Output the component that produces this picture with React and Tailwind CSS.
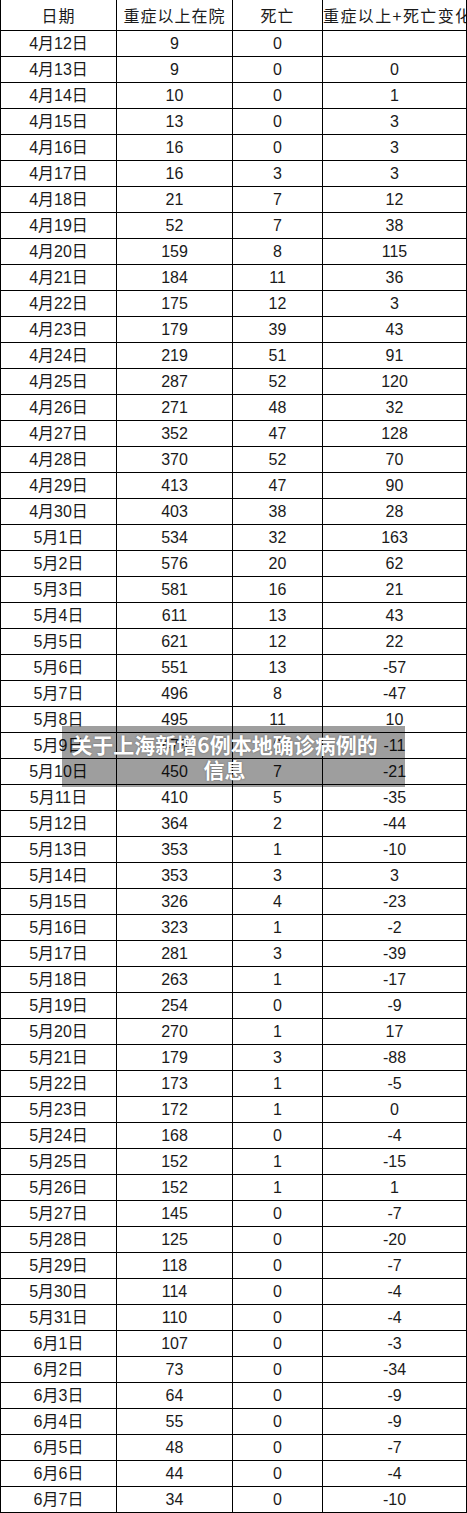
const rows = [
  ["4月12日", "9", "0", ""],
  ["4月13日", "9", "0", "0"],
  ["4月14日", "10", "0", "1"],
  ["4月15日", "13", "0", "3"],
  ["4月16日", "16", "0", "3"],
  ["4月17日", "16", "3", "3"],
  ["4月18日", "21", "7", "12"],
  ["4月19日", "52", "7", "38"],
  ["4月20日", "159", "8", "115"],
  ["4月21日", "184", "11", "36"],
  ["4月22日", "175", "12", "3"],
  ["4月23日", "179", "39", "43"],
  ["4月24日", "219", "51", "91"],
  ["4月25日", "287", "52", "120"],
  ["4月26日", "271", "48", "32"],
  ["4月27日", "352", "47", "128"],
  ["4月28日", "370", "52", "70"],
  ["4月29日", "413", "47", "90"],
  ["4月30日", "403", "38", "28"],
  ["5月1日", "534", "32", "163"],
  ["5月2日", "576", "20", "62"],
  ["5月3日", "581", "16", "21"],
  ["5月4日", "611", "13", "43"],
  ["5月5日", "621", "12", "22"],
  ["5月6日", "551", "13", "-57"],
  ["5月7日", "496", "8", "-47"],
  ["5月8日", "495", "11", "10"],
  ["5月9日", "478", "6", "-11"],
  ["5月10日", "450", "7", "-21"],
  ["5月11日", "410", "5", "-35"],
  ["5月12日", "364", "2", "-44"],
  ["5月13日", "353", "1", "-10"],
  ["5月14日", "353", "3", "3"],
  ["5月15日", "326", "4", "-23"],
  ["5月16日", "323", "1", "-2"],
  ["5月17日", "281", "3", "-39"],
  ["5月18日", "263", "1", "-17"],
  ["5月19日", "254", "0", "-9"],
  ["5月20日", "270", "1", "17"],
  ["5月21日", "179", "3", "-88"],
  ["5月22日", "173", "1", "-5"],
  ["5月23日", "172", "1", "0"],
  ["5月24日", "168", "0", "-4"],
  ["5月25日", "152", "1", "-15"],
  ["5月26日", "152", "1", "1"],
  ["5月27日", "145", "0", "-7"],
  ["5月28日", "125", "0", "-20"],
  ["5月29日", "118", "0", "-7"],
  ["5月30日", "114", "0", "-4"],
  ["5月31日", "110", "0", "-4"],
  ["6月1日", "107", "0", "-3"],
  ["6月2日", "73", "0", "-34"],
  ["6月3日", "64", "0", "-9"],
  ["6月4日", "55", "0", "-9"],
  ["6月5日", "48", "0", "-7"],
  ["6月6日", "44", "0", "-4"],
  ["6月7日", "34", "0", "-10"],
];

const cell = "flex items-center justify-center border-r border-black";

export default function App() {
  return (
    <div className="relative w-[467px] bg-white text-[#1a1a1a] font-['Liberation_Sans','Noto_Sans_CJK_SC',sans-serif]">
      <div className="border-l border-black">
        {/* header */}
        <div className="flex h-[31px] border-b border-black font-['Noto_Sans_CJK_SC',sans-serif] text-[16px] tracking-[1px]">
          <div className={`${cell} w-[116px]`}>日期</div>
          <div className={`${cell} w-[116px]`}>重症以上在院</div>
          <div className={`${cell} w-[90px]`}>死亡</div>
          <div className="flex items-center w-[144px] border-r border-black overflow-hidden whitespace-nowrap tracking-[1.4px]">
            重症以上+死亡变化
          </div>
        </div>

        {rows.map((r) => (
          <div key={r[0]} className="flex h-[26px] border-b border-black text-[16px]">
            <div className={`${cell} w-[116px]`}>{r[0]}</div>
            <div className={`${cell} w-[116px]`}>{r[1]}</div>
            <div className={`${cell} w-[90px]`}>{r[2]}</div>
            <div className={`${cell} w-[144px]`}>{r[3]}</div>
          </div>
        ))}
      </div>

      {/* caption overlay */}
      <div className="absolute left-[62px] top-[726px] w-[343px] h-[61px] bg-black/[0.38] pt-[6px] pr-[18px] text-center text-white font-bold text-[21px] leading-[25px] font-['Noto_Sans_CJK_SC',sans-serif] [text-shadow:0_0_2px_rgba(0,0,0,0.35)]">
        关于上海新增6例本地确诊病例的
        <br />
        信息
      </div>
    </div>
  );
}
